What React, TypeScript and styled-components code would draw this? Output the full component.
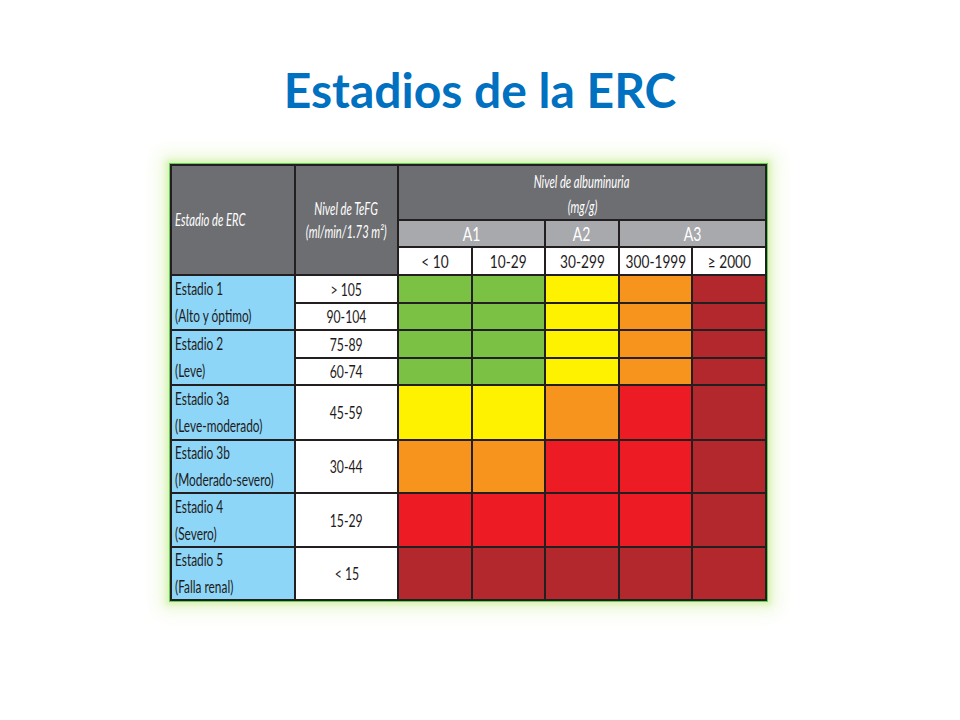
import React from 'react';
import styled, { createGlobalStyle } from 'styled-components';

const Global = createGlobalStyle`
  html, body { margin: 0; padding: 0; background: #ffffff; }
  body { font-family: Lato, "Liberation Sans", sans-serif; }
`;

const Page = styled.div`
  width: 960px;
  height: 720px;
  display: flex;
  flex-direction: column;
  align-items: center;
`;

const Title = styled.h1`
  margin: 61px 0 0;
  font: 700 48px/1.2 Lato, "Liberation Sans", sans-serif;
  color: #0070c0;
`;

const FrameRow = styled.div`
  align-self: stretch;
  display: flex;
  padding: 44px 0 0 169px;
`;

const Frame = styled.div`
  border: 1px solid #5fd05a;
  background: #ffffff;
  box-shadow: 0 0 5px 3px rgba(214, 240, 170, 0.8),
    0 0 16px 9px rgba(230, 246, 205, 0.75);
`;

const Grid = styled.div`
  display: grid;
  grid-template-columns: 122px 101px 72px 71px 72px 71px 72px;
  grid-template-rows: 53px 25px 26px 26px 25px 26px 25px 53px 51px 52px 51px;
  gap: 2px;
  padding: 2px;
  background: #231f20;
`;

const Cell = styled.div<{ $bg: string; $cols?: number; $rows?: number; $left?: boolean; $pt?: number }>`
  background: ${(p) => p.$bg};
  grid-column: span ${(p) => p.$cols ?? 1};
  grid-row: span ${(p) => p.$rows ?? 1};
  display: flex;
  flex-direction: column;
  justify-content: center;
  align-items: ${(p) => (p.$left ? 'flex-start' : 'center')};
  padding-left: ${(p) => (p.$left ? '3px' : '0')};
  padding-top: ${(p) => p.$pt ?? 0}px;
  overflow: hidden;
  min-width: 0;
`;

const Text = styled.span<{ $size: number; $lh: number; $italic?: boolean; $light?: boolean; $left?: boolean; $sx?: number }>`
  display: block;
  white-space: nowrap;
  font-family: Lato, "Liberation Sans", sans-serif;
  font-size: ${(p) => p.$size}px;
  line-height: ${(p) => p.$lh}px;
  font-style: ${(p) => (p.$italic ? 'italic' : 'normal')};
  color: ${(p) => (p.$light ? '#ffffff' : '#1f1b1c')};
  transform: scaleX(${(p) => p.$sx ?? 0.66});
  transform-origin: ${(p) => (p.$left ? 'left center' : 'center center')};
`;

const C = {
  dark: '#6d6e71',
  grey: '#a7a9ac',
  white: '#ffffff',
  blue: '#8dd6f7',
  G: '#7bc143',
  Y: '#fff200',
  O: '#f7941e',
  R: '#ed1c24',
  D: '#b3282d',
};

type Key = 'G' | 'Y' | 'O' | 'R' | 'D';

const stages: { lines: [string, string]; rows: { value: string; colors: Key[] }[] }[] = [
  {
    lines: ['Estadio 1', '(Alto y óptimo)'],
    rows: [
      { value: '> 105', colors: ['G', 'G', 'Y', 'O', 'D'] },
      { value: '90-104', colors: ['G', 'G', 'Y', 'O', 'D'] },
    ],
  },
  {
    lines: ['Estadio 2', '(Leve)'],
    rows: [
      { value: '75-89', colors: ['G', 'G', 'Y', 'O', 'D'] },
      { value: '60-74', colors: ['G', 'G', 'Y', 'O', 'D'] },
    ],
  },
  { lines: ['Estadio 3a', '(Leve-moderado)'], rows: [{ value: '45-59', colors: ['Y', 'Y', 'O', 'R', 'D'] }] },
  { lines: ['Estadio 3b', '(Moderado-severo)'], rows: [{ value: '30-44', colors: ['O', 'O', 'R', 'R', 'D'] }] },
  { lines: ['Estadio 4', '(Severo)'], rows: [{ value: '15-29', colors: ['R', 'R', 'R', 'R', 'D'] }] },
  { lines: ['Estadio 5', '(Falla renal)'], rows: [{ value: '< 15', colors: ['D', 'D', 'D', 'D', 'D'] }] },
];

const ranges = ['< 10', '10-29', '30-299', '300-1999', '≥ 2000'];

export default function App() {
  return (
    <Page>
      <Global />
      <Title>Estadios de la ERC</Title>
      <FrameRow>
        <Frame>
          <Grid>
            <Cell $bg={C.dark} $rows={3} $left>
              <Text $size={17} $lh={20} $italic $light $left>Estadio de ERC</Text>
            </Cell>
            <Cell $bg={C.dark} $rows={3}>
              <Text $size={17} $lh={23} $italic $light>Nivel de TeFG</Text>
              <Text $size={17} $lh={23} $italic $light>(ml/min/1.73 m²)</Text>
            </Cell>
            <Cell $bg={C.dark} $cols={5} $pt={4}>
              <Text $size={17} $lh={25} $italic $light>Nivel de albuminuria</Text>
              <Text $size={17} $lh={25} $italic $light>(mg/g)</Text>
            </Cell>
            <Cell $bg={C.grey} $cols={2}>
              <Text $size={20} $lh={25} $light $sx={0.7}>A1</Text>
            </Cell>
            <Cell $bg={C.grey}>
              <Text $size={20} $lh={25} $light $sx={0.7}>A2</Text>
            </Cell>
            <Cell $bg={C.grey} $cols={2}>
              <Text $size={20} $lh={25} $light $sx={0.7}>A3</Text>
            </Cell>
            {ranges.map((r) => (
              <Cell key={r} $bg={C.white}>
                <Text $size={18} $lh={26} $sx={0.76}>{r}</Text>
              </Cell>
            ))}
            {stages.map((s) => (
              <React.Fragment key={s.lines[0]}>
                <Cell $bg={C.blue} $rows={s.rows.length} $left>
                  {s.lines.map((l) => (
                    <Text key={l} $size={18} $lh={27} $left>{l}</Text>
                  ))}
                </Cell>
                {s.rows.map((row) => (
                  <React.Fragment key={row.value}>
                    <Cell $bg={C.white}>
                      <Text $size={18} $lh={26} $sx={0.68}>{row.value}</Text>
                    </Cell>
                    {row.colors.map((k, i) => (
                      <Cell key={i} $bg={C[k]} />
                    ))}
                  </React.Fragment>
                ))}
              </React.Fragment>
            ))}
          </Grid>
        </Frame>
      </FrameRow>
    </Page>
  );
}
